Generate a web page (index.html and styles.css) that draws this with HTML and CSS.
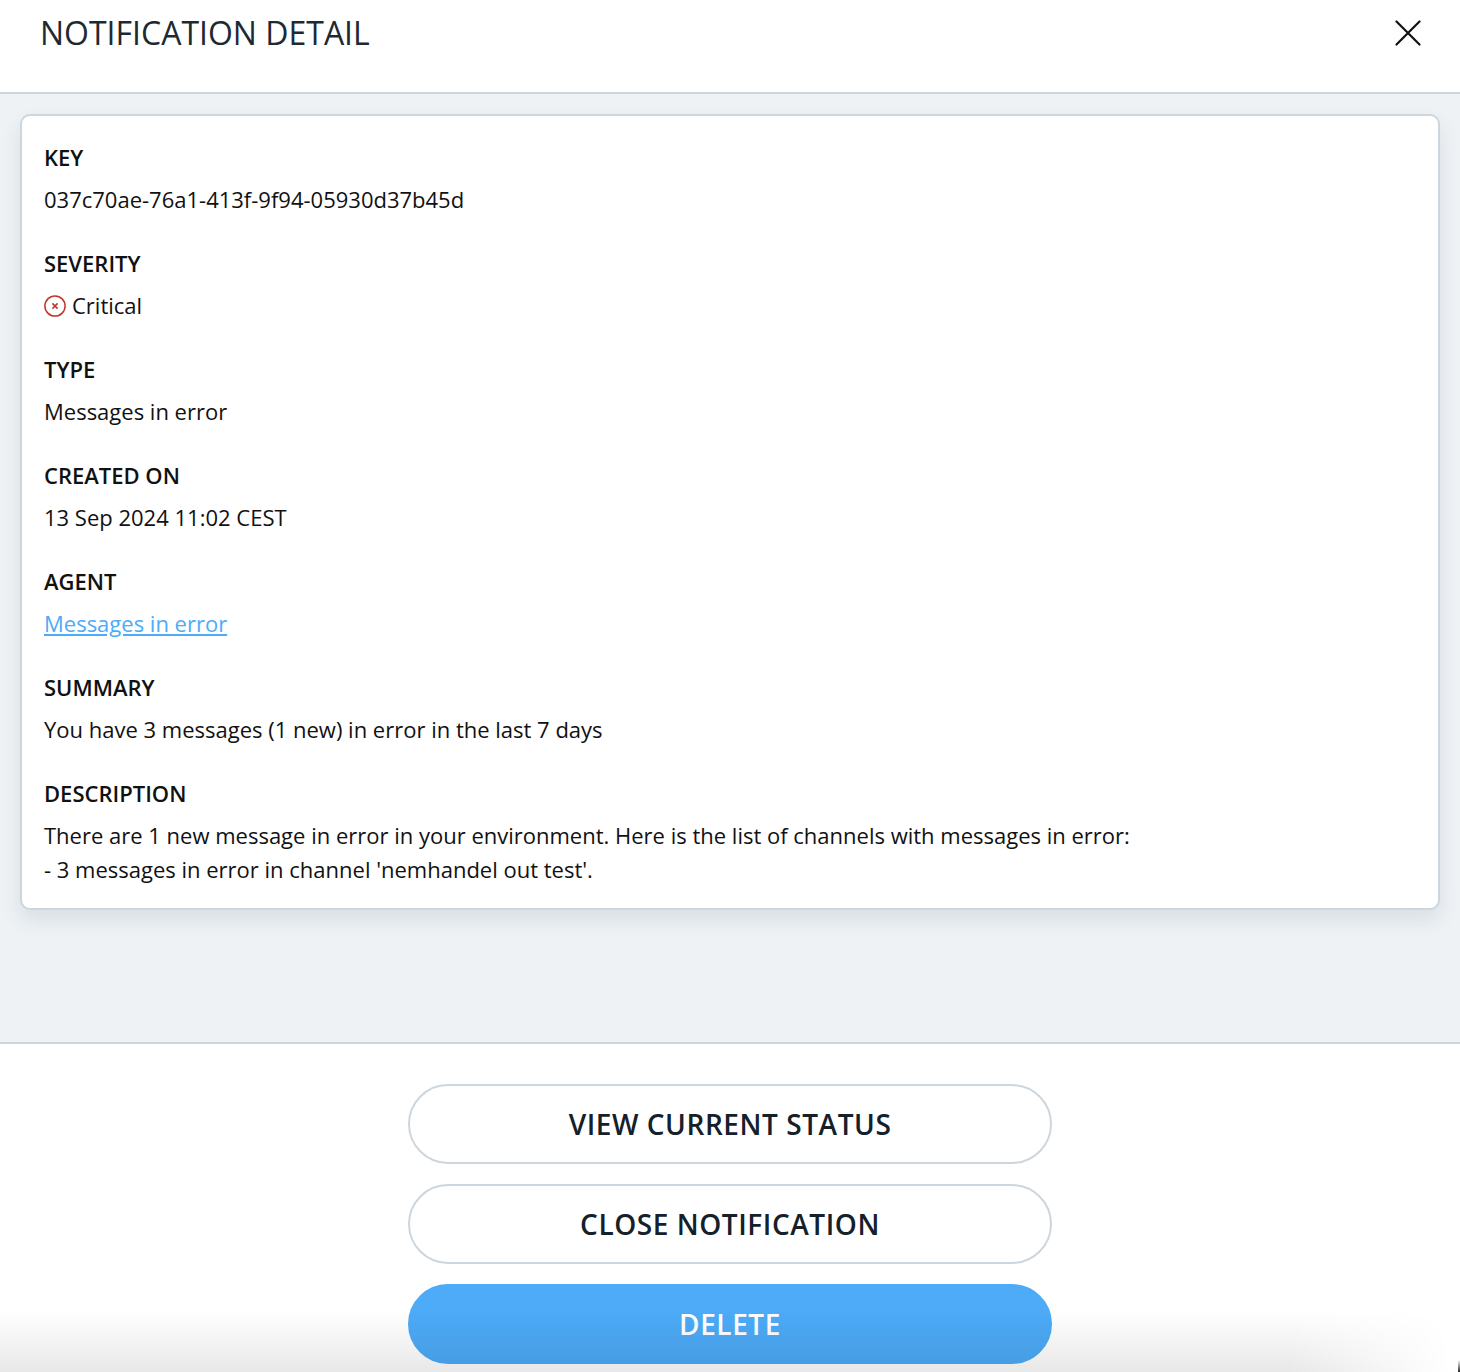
FILE: index.html
```html
<!DOCTYPE html>
<html lang="en">
<head>
<meta charset="utf-8">
<title>Notification detail</title>
<link rel="stylesheet" href="styles.css">
</head>
<body>
<div class="panel">
  <header class="head">
    <h1 class="title">NOTIFICATION DETAIL</h1>
    <button class="close" aria-label="Close">
      <svg width="26" height="26" viewBox="0 0 26 26"><path d="M1.5 1.5 24.5 24.5M24.5 1.5 1.5 24.5" fill="none" stroke="#111" stroke-width="2.2" stroke-linecap="round"/></svg>
    </button>
  </header>
  <main class="content">
    <section class="card">
      <div class="field"><div class="label">KEY</div><div class="value">037c70ae-76a1-413f-9f94-05930d37b45d</div></div>
      <div class="field"><div class="label">SEVERITY</div><div class="value severity">
        <svg class="sev-icon" width="22" height="22" viewBox="0 0 22 22"><circle cx="11" cy="11" r="10.1" fill="none" stroke="#c0342b" stroke-width="1.5"/><path d="M8.4 8.4 13.6 13.6M13.6 8.4 8.4 13.6" fill="none" stroke="#c0342b" stroke-width="1.5"/></svg>
        <span>Critical</span></div></div>
      <div class="field"><div class="label">TYPE</div><div class="value">Messages in error</div></div>
      <div class="field"><div class="label">CREATED ON</div><div class="value">13 Sep 2024 11:02 CEST</div></div>
      <div class="field"><div class="label">AGENT</div><div class="value"><a class="link" href="#">Messages in error</a></div></div>
      <div class="field"><div class="label">SUMMARY</div><div class="value">You have 3 messages (1 new) in error in the last 7 days</div></div>
      <div class="field"><div class="label">DESCRIPTION</div><div class="value">There are 1 new message in error in your environment. Here is the list of channels with messages in error:<br>- 3 messages in error in channel 'nemhandel out test'.</div></div>
    </section>
  </main>
  <footer class="foot">
    <button class="btn">VIEW CURRENT STATUS</button>
    <button class="btn">CLOSE NOTIFICATION</button>
    <button class="btn primary">DELETE</button>
  </footer>
</div>
</body>
</html>
```
FILE: styles.css
```css
* { box-sizing: border-box; }
html, body { margin: 0; padding: 0; background: #fff; }
body { font-family: "Open Sans", "Liberation Sans", sans-serif; color: #111; }
.panel { width: 1460px; height: 1372px; display: flex; flex-direction: column; position: relative; overflow: hidden; }
.panel::after { content: ""; position: absolute; right: 0; bottom: 0; width: 2px; height: 12px; background: linear-gradient(to bottom, rgba(0,0,0,0), rgba(0,0,0,.85)); }
.head { height: 94px; flex: none; display: flex; justify-content: space-between; align-items: flex-start; padding: 13px 39px 0 40px; border-bottom: 2px solid #cdd6dd; background: #fff; }
.title { margin: 0; font-size: 32px; line-height: 40px; font-weight: 400; color: #1d2a33; }
.close { border: 0; background: none; padding: 0; margin: 7px 0 0; width: 26px; height: 26px; display: block; }
.close svg { display: block; }
.content { height: 950px; flex: none; padding: 20px; background: #eef2f5; border-bottom: 2px solid #cdd6dd; }
.card { background: #fff; border: 2px solid #cdd6dd; border-radius: 10px; padding: 24px 22px 22px; box-shadow: 0 10px 20px rgba(40, 60, 80, .1); display: flex; flex-direction: column; gap: 30px; }
.label { font-size: 22px; line-height: 34px; font-weight: 600; color: #111; margin-bottom: 8px; }
.value { font-size: 22px; line-height: 34px; color: #111; }
.severity { display: flex; align-items: center; gap: 6px; }
.sev-icon { display: block; flex: none; margin-top: 2px; }
.link { color: #4dabf7; text-decoration: underline; }
.foot { flex: 1; display: flex; flex-direction: column; align-items: center; gap: 20px; padding-top: 40px; background: #fff; position: relative; }
.foot::after { content: ""; position: absolute; left: 0; right: 0; bottom: 0; height: 62px; background: linear-gradient(to bottom, rgba(0,0,0,0), rgba(0,0,0,.09)); -webkit-mask-image: linear-gradient(to left, transparent 10px, #000 170px); mask-image: linear-gradient(to left, transparent 10px, #000 170px); pointer-events: none; }
.btn { width: 644px; height: 80px; flex: none; border: 2px solid #cdd6dd; border-radius: 40px; background: #fff; padding: 0; font-family: inherit; font-size: 28px; font-weight: 600; letter-spacing: .56px; color: #14202a; }
.primary { background: #4dabf7; border-color: #4dabf7; color: #fff; }
```
